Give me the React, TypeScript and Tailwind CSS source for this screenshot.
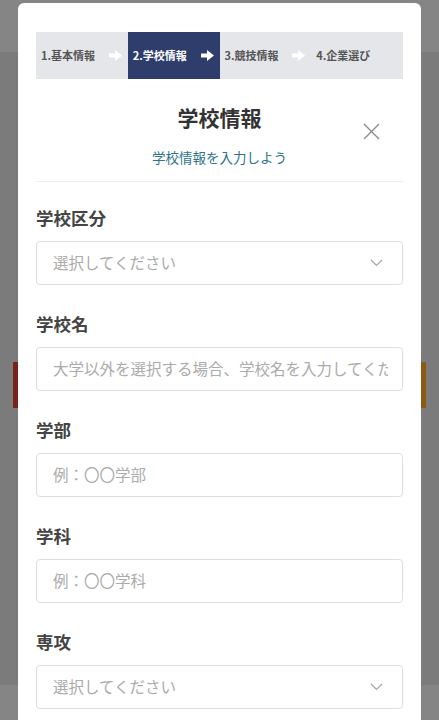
const steps = ['1.基本情報', '2.学校情報', '3.競技情報', '4.企業選び'];

function StepArrow() {
  return (
    <svg width="13" height="11" viewBox="0 0 13 11" className="shrink-0">
      <rect x="0" y="3.5" width="7" height="4" fill="#fff" />
      <path d="M6 0 L13 5.5 L6 11 Z" fill="#fff" />
    </svg>
  );
}

function Chevron() {
  return (
    <svg width="13" height="8" viewBox="0 0 13 8" fill="none" className="shrink-0">
      <path d="M1 1 L6.5 6.5 L12 1" stroke="#a3a3a3" strokeWidth="1.1" />
    </svg>
  );
}

function Field({ label, placeholder, select }: { label: string; placeholder: string; select?: boolean }) {
  return (
    <div className="flex flex-col">
      <label className="text-[17.5px] leading-[24px] font-bold text-[#444]">{label}</label>
      <div
        className={
          select
            ? 'mt-[11px] h-[44px] border border-[#dedede] rounded-[4px] flex items-center justify-between pl-[16px] pr-[19px]'
            : 'mt-[11px] h-[44px] border border-[#dedede] rounded-[4px] flex items-center pl-[16px] pr-[14px]'
        }
      >
        <span className="min-w-0 overflow-hidden text-[15.5px] text-[#ababab] whitespace-nowrap">{placeholder}</span>
        {select && <Chevron />}
      </div>
    </div>
  );
}

export default function App() {
  return (
    <div
      className="relative h-[720px] w-[439px] overflow-hidden bg-[#7b7b7b]"
      style={{ fontFamily: '"Noto Sans CJK JP", "Noto Sans", sans-serif' }}
    >
      {/* page behind the overlay */}
      <div className="h-[52px] bg-[#858585]" />
      <div className="h-[310px]" />
      <div className="h-[46px] flex justify-between px-[13px]">
        <div className="w-[6px] bg-[#7a2119]" />
        <div className="w-[6px] bg-[#8c5a12]" />
      </div>
      <div className="h-[277px]" />
      <div className="h-[35px] bg-[#858585]" />

      {/* modal */}
      <div className="absolute left-[18px] right-[18px] top-[3px] bottom-0 bg-white rounded-t-[6px] px-[18px] pt-[29px]">
        <div className="grid grid-cols-4 h-[47px] bg-[#e4e6ea]">
          {steps.map((s, i) => (
            <div
              key={s}
              className={
                i === 1
                  ? 'flex items-center justify-between pl-[5px] pr-[6px] bg-[#2f3d6d] text-white'
                  : 'flex items-center justify-between pl-[5px] pr-[6px] text-[#555]'
              }
            >
              <span className="text-[11px] font-bold whitespace-nowrap">{s}</span>
              {i < 3 && <StepArrow />}
            </div>
          ))}
        </div>

        <div className="relative flex flex-col items-center pt-[24px] pb-[14px] border-b border-[#ececec]">
          <h2 className="text-[21px] leading-[28px] font-bold text-[#333]">学校情報</h2>
          <p className="mt-[16px] text-[13.5px] leading-[20px] text-[#2f7389]">学校情報を入力しよう</p>
          <button className="absolute right-[23px] top-[44px]">
            <svg width="17" height="17" viewBox="0 0 17 17" fill="none">
              <path d="M1 1 L16 16 M16 1 L1 16" stroke="#8a8a8a" strokeWidth="1.4" />
            </svg>
          </button>
        </div>

        <div className="flex flex-col gap-[27px] pt-[24px]">
          <Field label="学校区分" placeholder="選択してください" select />
          <Field label="学校名" placeholder="大学以外を選択する場合、学校名を入力してください" />
          <Field label="学部" placeholder="例：〇〇学部" />
          <Field label="学科" placeholder="例：〇〇学科" />
          <Field label="専攻" placeholder="選択してください" select />
        </div>
      </div>
    </div>
  );
}
